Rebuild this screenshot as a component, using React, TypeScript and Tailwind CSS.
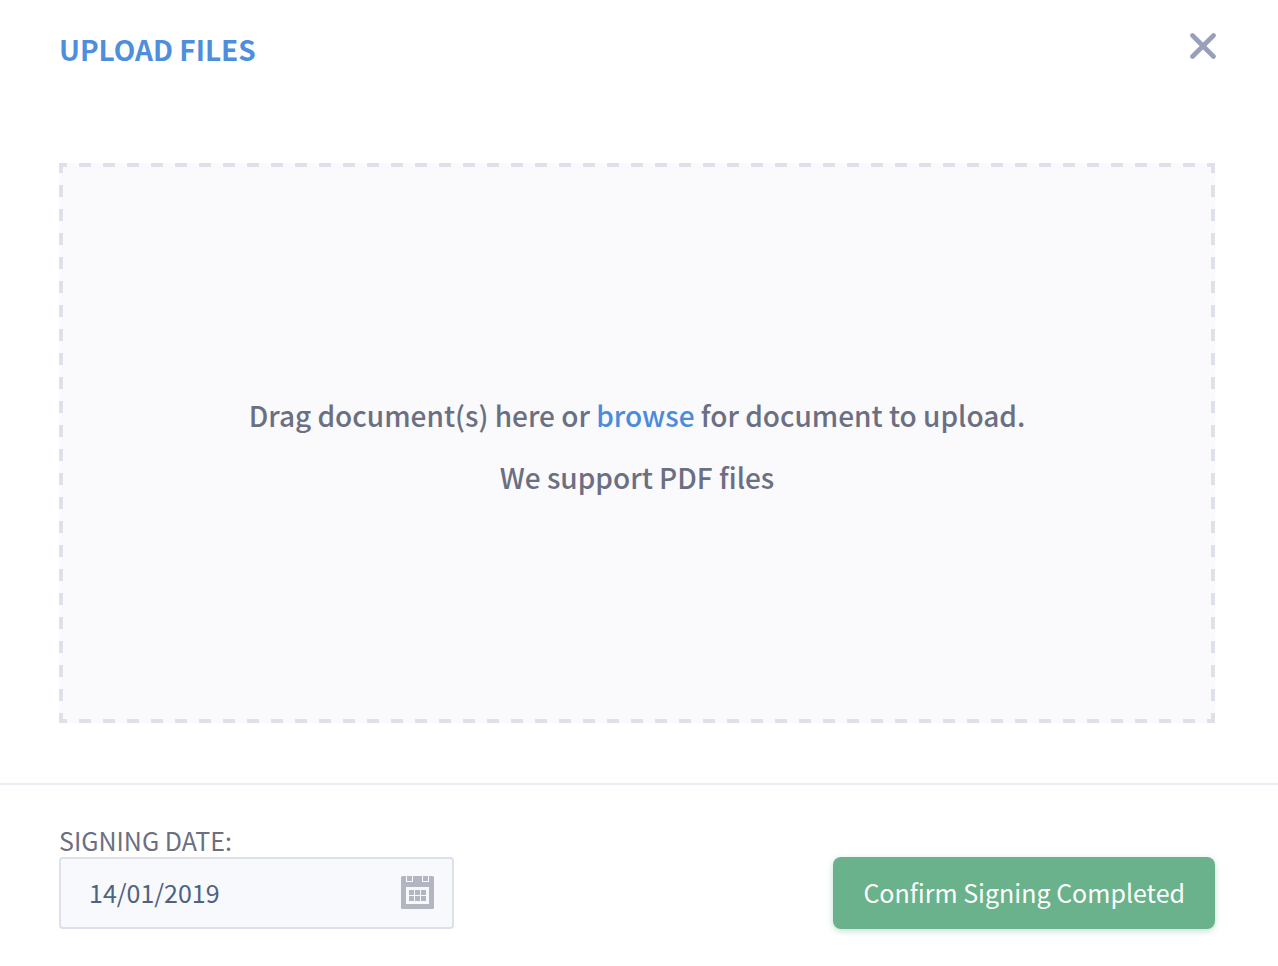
import { useState } from 'react';

function CloseIcon() {
  return (
    <svg viewBox="0 0 26 26" className="size-[26px]" fill="none" aria-hidden="true">
      <path d="M2.5 2.5 23.5 23.5M23.5 2.5 2.5 23.5" stroke="#979fbb" strokeWidth="4.6" strokeLinecap="round" />
    </svg>
  );
}

function CalendarIcon() {
  return (
    <svg viewBox="0 0 33 33" className="size-[33px]" aria-hidden="true">
      <rect width="33" height="33" rx="1.5" fill="#b3b6c0" />
      <path d="M5 0h7v6H5zM21 0h7v6h-7zM5 11h23v17H5z" fill="#f8f9fd" />
      <path
        d="M6 0h5v5H6zM22 0h5v5h-5zM8 14h5v5H8zM14 14h5v5h-5zM20 14h5v5h-5zM8 20h5v5H8zM14 20h5v5h-5zM20 20h5v5h-5z"
        fill="#b3b6c0"
      />
    </svg>
  );
}

export default function App() {
  const [date, setDate] = useState('14/01/2019');

  return (
    <main className="min-h-dvh bg-white font-['Noto_Sans_CJK_SC','Noto_Sans',sans-serif] text-[#6b6f82]">
      <header className="flex items-start justify-between pt-[31px] pr-[62px] pl-[59px]">
        <h1 className="text-[28px] leading-9 font-bold text-[#4f8edc]">UPLOAD FILES</h1>
        <button type="button" aria-label="Close" className="mt-0.5 cursor-pointer">
          <CloseIcon />
        </button>
      </header>

      <section className="pt-24 pr-[63px] pb-[60px] pl-[59px]">
        <div className="flex h-[560px] flex-col items-center justify-center bg-[#fafafc] [background-image:linear-gradient(90deg,#dee0ea_12px,transparent_12px),linear-gradient(90deg,#dee0ea_12px,transparent_12px),linear-gradient(#dee0ea_12px,transparent_12px),linear-gradient(#dee0ea_12px,transparent_12px)] [background-position:-4px_0,-4px_100%,0_-2px,100%_-2px] [background-repeat:repeat-x,repeat-x,repeat-y,repeat-y] [background-size:24px_4px,24px_4px,4px_24px,4px_24px] pt-1.5 text-center text-[28px] leading-[62px] font-medium">
          <p>
            Drag document(s) here or{' '}
            <a href="#browse" className="text-[#4a8bdb]">
              browse
            </a>{' '}
            for document to upload.
          </p>
          <p>We support PDF files</p>
        </div>
      </section>

      <footer className="flex items-end justify-between border-t-2 border-[#ebecf1] pt-[38px] pr-[63px] pb-9 pl-[59px]">
        <div>
          <label htmlFor="signing-date" className="block text-[25px] leading-[34px]">
            SIGNING DATE:
          </label>
          <div className="flex h-[72px] w-[395px] items-center rounded border-2 border-[#dee0ea] bg-[#f8f9fd] pr-[18px] pb-0.5 pl-7">
            <input
              id="signing-date"
              type="text"
              value={date}
              onChange={(e) => setDate(e.target.value)}
              className="min-w-0 flex-1 bg-transparent text-[25px] leading-8 text-[#4f6380] outline-none"
            />
            <CalendarIcon />
          </div>
        </div>
        <button
          type="button"
          className="h-[72px] cursor-pointer rounded-lg bg-[#69b28b] px-[30px] pb-0.5 text-[25px] leading-8 text-white shadow-[0_2px_6px_#69b28b66]"
        >
          Confirm Signing Completed
        </button>
      </footer>
    </main>
  );
}
